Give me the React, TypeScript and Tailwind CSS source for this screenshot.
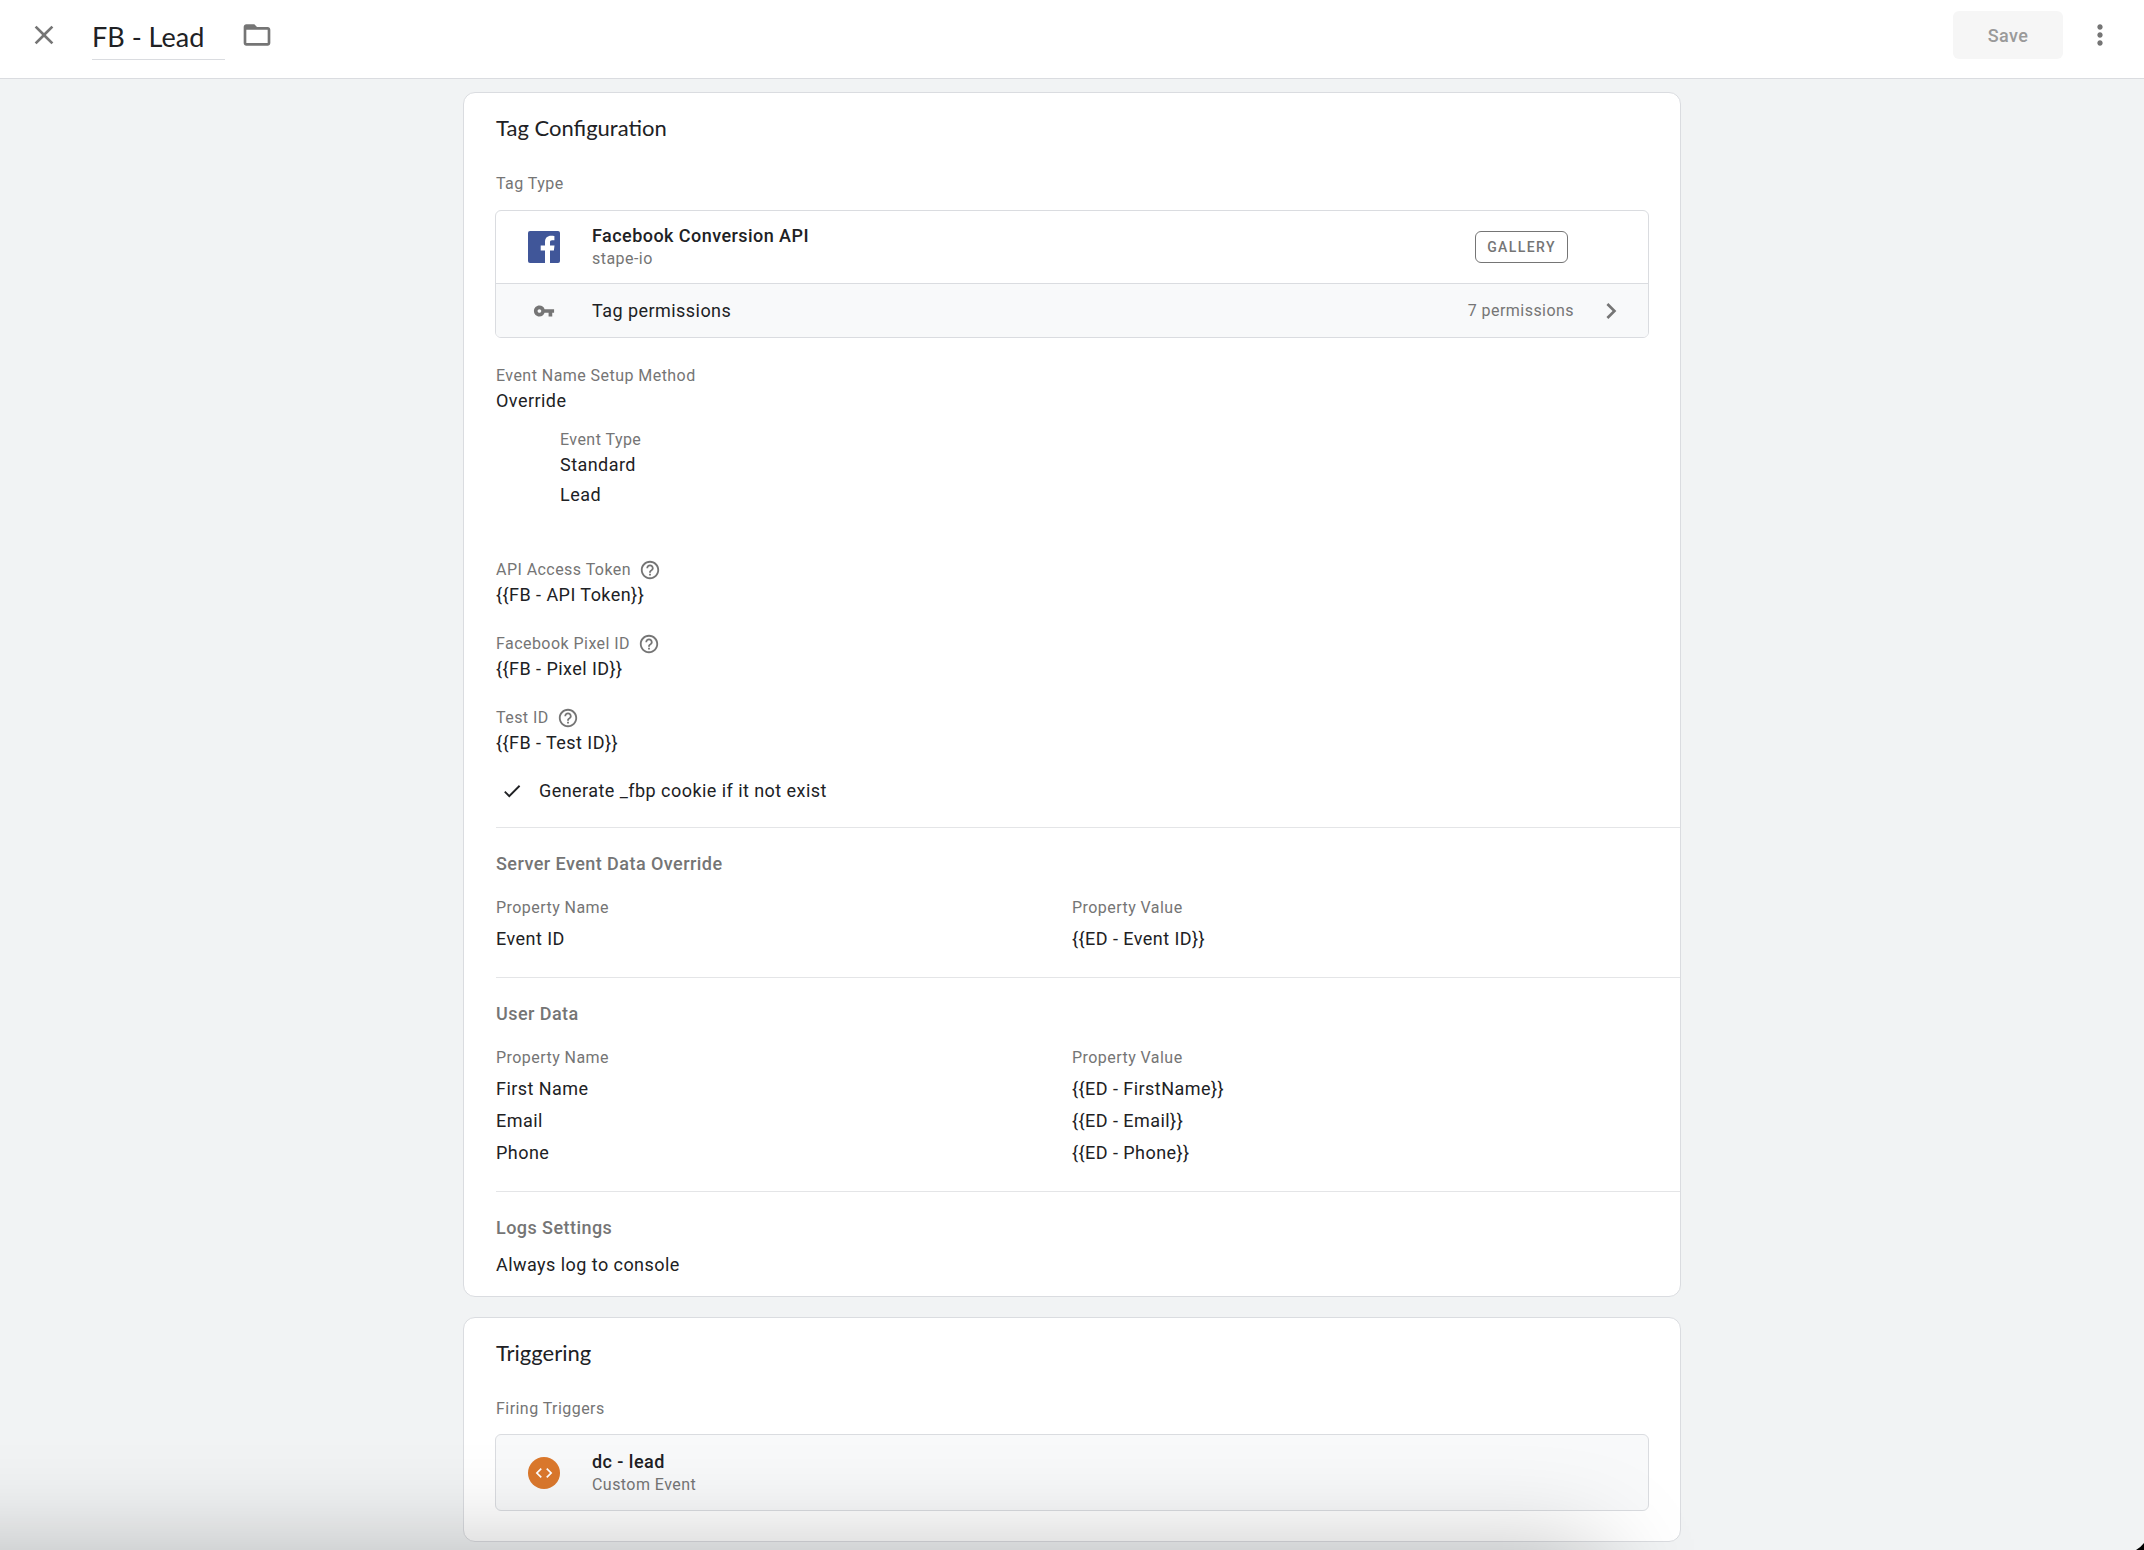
import type { ReactNode } from "react";
import {
  MdCheck,
  MdChevronRight,
  MdClose,
  MdCode,
  MdFolderOpen,
  MdHelpOutline,
  MdMoreVert,
  MdVpnKey,
} from "react-icons/md";

const serverEventData = [{ name: "Event ID", value: "{{ED - Event ID}}" }];

const userData = [
  { name: "First Name", value: "{{ED - FirstName}}" },
  { name: "Email", value: "{{ED - Email}}" },
  { name: "Phone", value: "{{ED - Phone}}" },
];

function FacebookIcon() {
  return (
    <svg viewBox="0 0 32 32" className="size-8" aria-hidden="true">
      <rect width="32" height="32" rx="2" fill="#405699" />
      <path
        d="M17 32V19.5h-4.3v-5H17v-3.6c0-4 2.4-6.2 6.2-6.2 1.4 0 2.6.1 3.2.2v4.3h-2.3c-1.7 0-2.1.8-2.1 2.1v3.2h4.5l-.6 5H22V32z"
        fill="#fff"
      />
    </svg>
  );
}

function Card({ title, children }: { title: string; children: ReactNode }) {
  return (
    <section className="rounded-xl border border-[#dadce0] bg-white pt-[21px]">
      <h2 className="px-8 font-['Lato','Roboto',sans-serif] text-[22px] leading-7 tracking-normal">{title}</h2>
      {children}
    </section>
  );
}

function Label({ children }: { children: ReactNode }) {
  return <p className="text-base leading-5 text-[#757575]">{children}</p>;
}

function Field({ label, value }: { label: string; value: string }) {
  return (
    <div>
      <div className="flex h-5 items-center gap-2">
        <Label>{label}</Label>
        <button type="button" aria-label={`About ${label}`} className="text-[#757575]">
          <MdHelpOutline size={22} />
        </button>
      </div>
      <p className="leading-[30px]">{value}</p>
    </div>
  );
}

function Section({ title, children }: { title: string; children: ReactNode }) {
  return (
    <div className="ml-8 border-t border-[#e4e5e7] pt-6 pr-8">
      <h3 className="font-medium leading-6 text-[#757575]">{title}</h3>
      {children}
    </div>
  );
}

function PropertyTable({ rows }: { rows: { name: string; value: string }[] }) {
  return (
    <table className="mt-[22px] mb-[23px] w-full table-fixed text-left">
      <thead>
        <tr className="h-6 align-top text-base leading-5 text-[#757575]">
          <th className="p-0 font-normal">Property Name</th>
          <th className="p-0 font-normal">Property Value</th>
        </tr>
      </thead>
      <tbody>
        {rows.map((row) => (
          <tr key={row.name} className="h-8">
            <td className="p-0">{row.name}</td>
            <td className="p-0">{row.value}</td>
          </tr>
        ))}
      </tbody>
    </table>
  );
}

export default function App() {
  return (
    <div className="min-h-screen bg-[#f1f3f4] font-['Roboto',sans-serif] text-[18px] tracking-wide text-[#202124]">
      <header className="flex h-[79px] items-center border-b border-[#dadce0] bg-white px-7 pb-2">
        <button type="button" aria-label="Close" className="text-[#757575]">
          <MdClose size={32} />
        </button>
        <input
          aria-label="Tag name"
          defaultValue="FB - Lead"
          className="ml-8 h-[50px] w-[133px] border-b border-[#dadce0] bg-transparent pt-1 font-['Lato','Roboto',sans-serif] text-[27px] tracking-normal outline-none"
        />
        <button type="button" aria-label="Move to folder" className="ml-4 text-[#757575]">
          <MdFolderOpen size={32} />
        </button>
        <button
          type="button"
          disabled
          className="ml-auto h-12 w-[110px] rounded-md bg-[#f6f6f6] font-medium text-[#9a9a9a]"
        >
          Save
        </button>
        <button type="button" aria-label="More actions" className="ml-[21px] text-[#757575]">
          <MdMoreVert size={32} />
        </button>
      </header>

      <main className="mx-auto flex max-w-[1218px] flex-col gap-5 pt-[13px] pb-[7px]">
        <Card title="Tag Configuration">
          <div className="mt-8 px-8">
            <Label>Tag Type</Label>
            <div className="-mx-px mt-4 overflow-hidden rounded-md border border-[#dadce0]">
              <div className="flex h-[72px] items-center pl-8">
                <FacebookIcon />
                <div className="ml-8">
                  <p className="font-medium leading-6">Facebook Conversion API</p>
                  <p className="text-base leading-[22px] text-[#757575]">stape-io</p>
                </div>
                <button
                  type="button"
                  className="mr-20 ml-auto h-8 w-[93px] rounded-md border border-[#757575] text-sm font-medium tracking-widest text-[#757575]"
                >
                  GALLERY
                </button>
              </div>
              <button
                type="button"
                className="flex h-[54px] w-full items-center border-t border-[#dadce0] bg-[#f8f9fa] pr-[21px] pl-8 text-left"
              >
                <span className="flex w-8 justify-center text-[#757575]">
                  <MdVpnKey size={22} />
                </span>
                <span className="ml-8">Tag permissions</span>
                <span className="mr-[21px] ml-auto text-base text-[#757575]">7 permissions</span>
                <MdChevronRight size={32} className="text-[#757575]" />
              </button>
            </div>

            <div className="mt-7">
              <Label>Event Name Setup Method</Label>
              <p className="leading-[30px]">Override</p>
            </div>
            <div className="mt-3.5 ml-16">
              <Label>Event Type</Label>
              <p className="leading-[30px]">Standard</p>
              <p className="leading-[30px]">Lead</p>
            </div>

            <div className="mt-[50px] flex flex-col gap-6">
              <Field label="API Access Token" value="{{FB - API Token}}" />
              <Field label="Facebook Pixel ID" value="{{FB - Pixel ID}}" />
              <Field label="Test ID" value="{{FB - Test ID}}" />
            </div>

            <label className="mt-[18px] mb-[21px] flex items-center pl-[5px] leading-[30px]">
              <input type="checkbox" checked readOnly className="sr-only" />
              <MdCheck size={22} />
              <span className="ml-4">Generate _fbp cookie if it not exist</span>
            </label>
          </div>

          <Section title="Server Event Data Override">
            <PropertyTable rows={serverEventData} />
          </Section>
          <Section title="User Data">
            <PropertyTable rows={userData} />
          </Section>
          <Section title="Logs Settings">
            <p className="mt-2.5 mb-4 leading-[30px]">Always log to console</p>
          </Section>
        </Card>

        <Card title="Triggering">
          <div className="mt-8 px-8 pb-[30px]">
            <Label>Firing Triggers</Label>
            <div className="-mx-px mt-[15px] flex h-[77px] items-center rounded-md border border-[#dadce0] bg-[#f8f9fa] pl-8">
              <span className="flex size-8 items-center justify-center rounded-full bg-[#db782c] text-white">
                <MdCode size={20} />
              </span>
              <div className="ml-8">
                <p className="font-medium leading-6">dc - lead</p>
                <p className="text-base leading-[22px] text-[#757575]">Custom Event</p>
              </div>
            </div>
          </div>
        </Card>
      </main>

      {/* soft shadow rising from the bottom edge */}
      <div className="pointer-events-none fixed right-[544px] -bottom-60 -left-40 h-60 shadow-[0_0_100px_rgba(0,0,0,0.25)]" />
      <svg viewBox="0 0 8 7" className="pointer-events-none fixed right-0 bottom-0 h-[7px] w-2" aria-hidden="true">
        <path d="M8 0Q5 4 0 7h8z" fill="#000" />
      </svg>
    </div>
  );
}
